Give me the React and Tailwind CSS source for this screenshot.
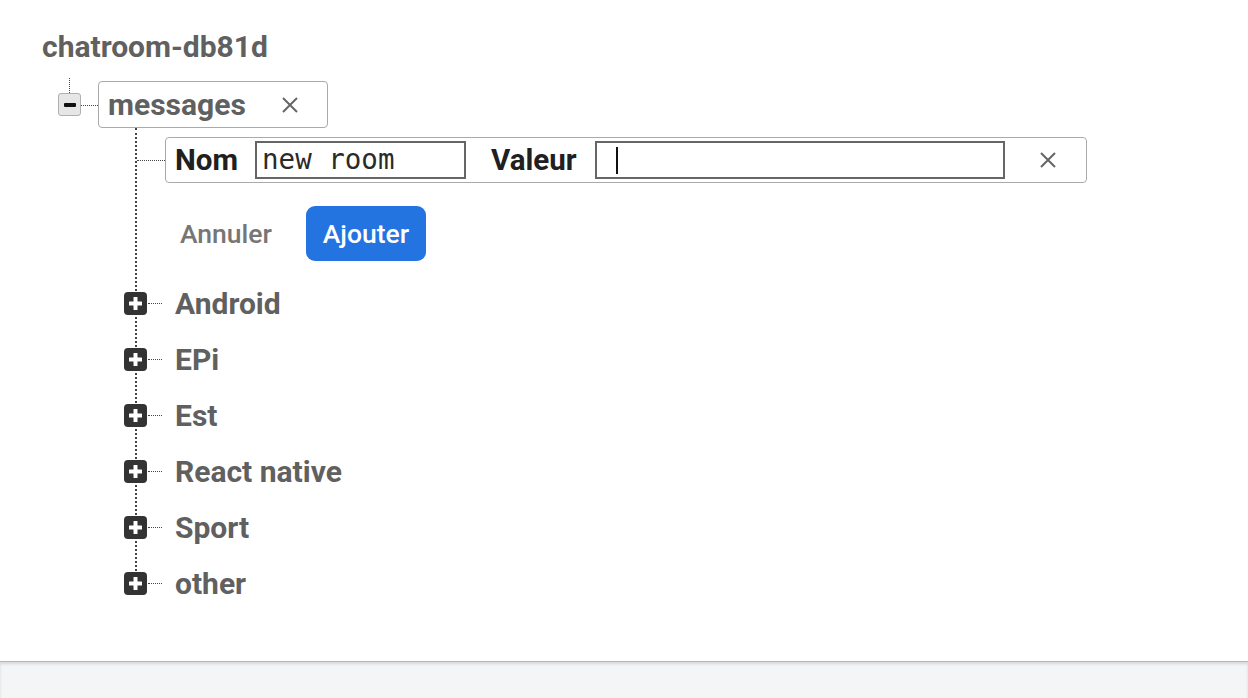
import React from 'react';

const children = ['Android', 'EPi', 'Est', 'React native', 'Sport', 'other'];

const CloseIcon = ({ size = 20 }) => (
    <svg width={size} height={size} viewBox="0 0 20 20" fill="none" stroke="#666" strokeWidth="2">
        <path d="M3 3 L17 17 M17 3 L3 17" />
    </svg>
);

const PlusBox = () => (
    <div className="w-[23px] h-[23px] shrink-0 rounded-[4px] bg-[#333] flex items-center justify-center">
        <svg width="13" height="13" viewBox="0 0 13 13" fill="#fff">
            <rect x="4.5" y="0" width="4" height="13" rx="0.5" />
            <rect x="0" y="4.5" width="13" height="4" rx="0.5" />
        </svg>
    </div>
);

const App = () => {
    return (
        <div className="w-[1248px] h-[698px] flex flex-col bg-white font-['Roboto',sans-serif] overflow-hidden">
            <div className="flex-1 pl-[42px] pt-[33px]">
                {/* root */}
                <div className="text-[30px] leading-[28px] font-bold text-[#606060]">chatroom-db81d</div>

                {/* messages row */}
                <div className="flex items-start mt-[17px]">
                    <div className="flex flex-col items-center w-[23px] ml-[16px]">
                        <div className="h-[15px] border-l border-dotted border-[#444]" />
                        <div className="w-[23px] h-[23px] rounded-[3px] bg-[#e6e6e6] border border-[#b0b0b0] flex items-center justify-center">
                            <div className="w-[12px] h-[4px] bg-[#111] rounded-[1px]" />
                        </div>
                    </div>
                    <div className="w-[17px] mt-[27px] border-t border-dotted border-[#444]" />
                    <div className="mt-[3px] w-[230px] h-[47px] border border-[#aaa] rounded-[4px] flex items-center pl-[9px] pr-[27px] justify-between">
                        <span className="text-[30px] leading-[34px] font-bold text-[#606060]">messages</span>
                        <CloseIcon />
                    </div>
                </div>

                {/* children */}
                <div className="ml-[93px] border-l-2 border-dotted border-[#444] flex flex-col">
                    {/* new entry editor */}
                    <div className="flex items-center pt-[9px]">
                        <div className="w-[28px] border-t border-dotted border-[#444]" />
                        <div className="w-[922px] h-[46px] border border-[#aaa] rounded-[4px] flex items-center pl-[9px]">
                            <span className="text-[29.5px] leading-[34px] font-bold text-[#202020]">Nom</span>
                            <div className="ml-[17px] w-[211px] h-[38px] border-2 border-[#666] flex items-center pl-[5px] font-['DejaVu_Sans_Mono',monospace] text-[27.5px] text-[#2a2a2a]">
                                new room
                            </div>
                            <span className="ml-[25px] text-[29.5px] leading-[34px] font-bold text-[#202020]">Valeur</span>
                            <div className="ml-[18px] w-[410px] h-[38px] border-2 border-[#666] flex items-center pl-[19px]">
                                <div className="w-[2px] h-[27px] bg-[#111]" />
                            </div>
                            <div className="ml-[33px]">
                                <CloseIcon />
                            </div>
                        </div>
                    </div>

                    {/* actions */}
                    <div className="flex items-center pl-[27px] mt-[23px]">
                        <button className="h-[55px] px-[16px] text-[26.5px] font-medium text-[#767676]">Annuler</button>
                        <button className="ml-[18px] h-[55px] w-[120px] rounded-[9px] bg-[#2374e1] text-[26.5px] font-medium text-white">Ajouter</button>
                    </div>

                    {/* keys */}
                    <div className="flex flex-col gap-[33px] mt-[31px]">
                        {children.map((name) => (
                            <div key={name} className="flex items-center h-[23px] -ml-[13px]">
                                <PlusBox />
                                <div className="w-[14px] ml-[1px] border-t border-dotted border-[#444]" />
                                <span className="ml-[13px] text-[30px] font-bold text-[#606060] leading-[34px]">{name}</span>
                            </div>
                        ))}
                    </div>
                </div>
            </div>

            <div className="h-[37px] shrink-0 bg-[#f4f5f7] border-t border-[#b8b8b8] shadow-[inset_0_2px_3px_rgba(0,0,0,0.12)]" />
        </div>
    );
};

export default App;
